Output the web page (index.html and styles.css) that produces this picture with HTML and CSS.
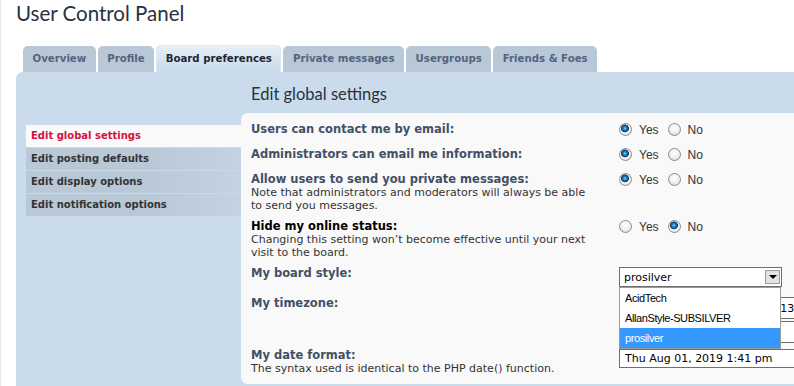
FILE: index.html
```html
<!doctype html>
<html lang="en">
  <head>
    <meta charset="UTF-8" />
    <meta name="viewport" content="width=device-width, initial-scale=1.0" />
    <title>User Control Panel</title>
    <link rel="stylesheet" href="styles.css">
  </head>
  <body>
    <div class="page">
      <h1 class="page-title">User Control Panel</h1>

      <ul class="tabs">
        <li class="tab"><a href="#">Overview</a></li>
        <li class="tab"><a href="#">Profile</a></li>
        <li class="tab active"><a href="#">Board preferences</a></li>
        <li class="tab"><a href="#">Private messages</a></li>
        <li class="tab"><a href="#">Usergroups</a></li>
        <li class="tab"><a href="#">Friends &amp; Foes</a></li>
      </ul>

      <div class="panel">
        <div class="panel-side">
          <ul class="menu">
            <li class="active"><a href="#">Edit global settings</a></li>
            <li><a href="#">Edit posting defaults</a></li>
            <li><a href="#">Edit display options</a></li>
            <li><a href="#">Edit notification options</a></li>
          </ul>
        </div>

        <div class="panel-main">
          <h2>Edit global settings</h2>
          <div class="settings">
            <dl class="row">
              <dt><span class="label">Users can contact me by email:</span></dt>
              <dd class="choices">
                <label><input class="radio" type="radio" name="viewemail" checked> Yes</label>
                <label><input class="radio" type="radio" name="viewemail"> No</label>
              </dd>
            </dl>
            <dl class="row">
              <dt><span class="label">Administrators can email me information:</span></dt>
              <dd class="choices">
                <label><input class="radio" type="radio" name="massemail" checked> Yes</label>
                <label><input class="radio" type="radio" name="massemail"> No</label>
              </dd>
            </dl>
            <dl class="row">
              <dt>
                <span class="label">Allow users to send you private messages:</span>
                <span class="explain">Note that administrators and moderators will always be able to send you messages.</span>
              </dt>
              <dd class="choices">
                <label><input class="radio" type="radio" name="allowpm" checked> Yes</label>
                <label><input class="radio" type="radio" name="allowpm"> No</label>
              </dd>
            </dl>
            <dl class="row">
              <dt>
                <span class="label dark">Hide my online status:</span>
                <span class="explain">Changing this setting won’t become effective until your next visit to the board.</span>
              </dt>
              <dd class="choices">
                <label><input class="radio" type="radio" name="hideonline"> Yes</label>
                <label><input class="radio" type="radio" name="hideonline" checked> No</label>
              </dd>
            </dl>
            <dl class="row">
              <dt><span class="label">My board style:</span></dt>
              <dd class="field-style">
                <div class="select open">
                  <span class="select-value">prosilver</span>
                  <span class="select-arrow"></span>
                  <ul class="select-list">
                    <li>AcidTech</li>
                    <li>AllanStyle-SUBSILVER</li>
                    <li class="selected">prosilver</li>
                  </ul>
                </div>
              </dd>
            </dl>
            <dl class="row">
              <dt><span class="label">My timezone:</span></dt>
              <dd class="field-tz">
                <div class="select wide"><span class="select-value tz-date">UTC+02:00 - Aug 01, 2019 13:41</span></div>
                <div class="select wide short"><span class="select-value">Europe/Berlin</span></div>
              </dd>
            </dl>
            <dl class="row">
              <dt>
                <span class="label">My date format:</span>
                <span class="explain">The syntax used is identical to the PHP date() function.</span>
              </dt>
              <dd>
                <div class="text-input">Thu Aug 01, 2019 1:41 pm</div>
              </dd>
            </dl>
          </div>
        </div>
      </div>
    </div>
  </body>
</html>
```

FILE: styles.css
```css
body {
  margin: 0;
  background: #ffffff;
  font-family: "DejaVu Sans", Verdana, sans-serif;
  color: #333333;
  overflow: hidden;
}

.page {
  border-left: 1px solid #e4ecf3;
  padding-left: 15px;
  min-height: 100vh;
}

.page-title {
  margin: 0;
  padding-top: 1px;
  font-family: "Lato", "Open Sans", sans-serif;
  font-weight: normal;
  font-size: 20.5px;
  line-height: 24px;
  color: #28313f;
}

/* tabs */
.tabs {
  list-style: none;
  margin: 20px 0 0;
  padding: 0 0 0 7px;
  height: 27px;
  display: flex;
  align-items: flex-end;
  gap: 2px;
}

.tab {
  height: 26px;
  background: #b8c8d6;
  border-radius: 5px 5px 0 0;
}

.tab a {
  display: block;
  padding: 0 9.5px;
  line-height: 26px;
  font-size: 10.2px;
  font-weight: bold;
  color: #536482;
  text-decoration: none;
}

.tab.active {
  height: 28px;
  margin-bottom: -1px;
  position: relative;
  z-index: 1;
  background: linear-gradient(#e9f1f8, #cadceb 85%);
  box-shadow: inset 1px 1px 0 #dfe8f1, inset -1px 0 0 #dfe8f1;
}

.tab.active a {
  line-height: 28px;
  color: #1f2733;
}

/* panel */
.panel {
  width: 900px;
  display: flex;
  background: #cadceb;
  border-radius: 7px 7px 0 0;
  padding-bottom: 12px;
}

.panel-side {
  width: 215px;
  padding: 53px 0 0 10px;
  flex-shrink: 0;
}

.menu {
  list-style: none;
  margin: 0;
  padding: 0;
}

.menu li a {
  display: block;
  height: 22px;
  line-height: 22px;
  padding-left: 5px;
  border-bottom: 1px solid #cbd9e6;
  background: linear-gradient(to right, #b8c8d6 55%, #c3d3e1);
  font-size: 10px;
  font-weight: bold;
  color: #333333;
  text-decoration: none;
}

.menu li.active a {
  background: #fafafa;
  color: #d31141;
}

.panel-main {
  flex: 1;
}

.panel-main h2 {
  margin: 0 0 9px;
  padding: 12px 0 0 10px;
  font-family: "Lato", "Open Sans", sans-serif;
  font-weight: normal;
  font-size: 16.5px;
  line-height: 20px;
  color: #28313f;
}

.settings {
  background: #f9f9f9;
  border-radius: 7px 0 0 7px;
  padding: 6px 10px 4px;
}

.row {
  display: flex;
  margin: 0;
  padding: 4px 0;
}

.row dt {
  width: 346px;
  margin-right: 22px;
  flex-shrink: 0;
}

.row dd {
  margin: 0;
}

.label {
  display: block;
  margin-bottom: 1px;
  font-size: 11.5px;
  font-weight: bold;
  line-height: 13px;
  color: #425067;
}

.label.dark {
  color: #000000;
}

.explain {
  display: block;
  font-size: 11px;
  line-height: 12.5px;
  color: #333333;
}

/* radios */
.choices {
  height: 17px;
  display: flex;
  align-items: flex-start;
  gap: 9px;
}

.choices label {
  display: flex;
  align-items: center;
  gap: 7px;
  height: 13px;
  font-family: "Liberation Sans", Arial, sans-serif;
  font-size: 12px;
  color: #333333;
}

.radio {
  appearance: none;
  -webkit-appearance: none;
  width: 13px;
  height: 13px;
  margin: 0;
  border: 1px solid #8c8c8c;
  border-radius: 50%;
  background: radial-gradient(circle at 50% 35%, #ffffff 0, #f2f2f2 45%, #d2d2d2 100%);
}

.radio:checked {
  background: radial-gradient(circle at 45% 40%, #8ed6ff 0, #1f8ad4 1.5px, #0d568f 3px, #26384c 3.7px, #ffffff 4.3px, #eeeeee 60%, #cfcfcf 100%);
}

/* selects */
.field-style {
  height: 22px;
}

.field-tz {
  height: 44px;
}

.select {
  position: relative;
  display: flex;
  align-items: center;
  width: 161px;
  height: 18px;
  border: 1px solid #6f6f6f;
  background: #ffffff;
  font-size: 11px;
  color: #000000;
}

.select-value {
  flex: 1;
  padding-left: 4px;
  white-space: nowrap;
}

.select-value.tz-date {
  padding-left: 9px;
}

.select-arrow {
  width: 15px;
  height: 14px;
  margin-right: 1px;
  border: 1px solid #9c9c9c;
  box-sizing: border-box;
  background: #e2e2e2;
  display: flex;
  align-items: center;
  justify-content: center;
}

.select-arrow::after {
  content: "";
  border-left: 4px solid transparent;
  border-right: 4px solid transparent;
  border-top: 4px solid #000000;
}

.select-list {
  position: absolute;
  z-index: 2;
  top: 19px;
  left: -1px;
  width: 160px;
  margin: 0;
  padding: 0;
  list-style: none;
  border: 1px solid #9a9a9a;
  background: #ffffff;
}

.select-list li {
  height: 20px;
  line-height: 20px;
  padding-left: 5px;
  font-family: "Liberation Sans", Tahoma, sans-serif;
  font-size: 11px;
  letter-spacing: -0.4px;
  color: #000000;
}

.select-list li.selected {
  background: #3399ff;
  color: #ffffff;
}

.select.wide {
  width: 240px;
  height: 20px;
  overflow: hidden;
}

.select.short {
  margin-top: 2px;
}

.text-input {
  width: 240px;
  height: 17px;
  line-height: 17px;
  padding-left: 5px;
  border: 1px solid #6f6f6f;
  background: #ffffff;
  font-size: 11px;
  color: #000000;
  white-space: nowrap;
}
```
